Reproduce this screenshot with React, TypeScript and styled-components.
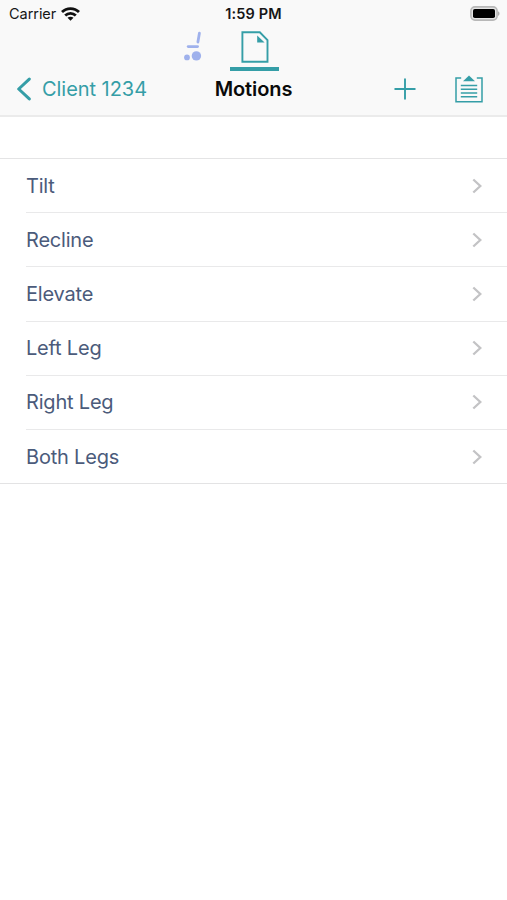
import React from "react";
import styled, { createGlobalStyle } from "styled-components";

const TEAL = "#359ea7";

const GlobalStyle = createGlobalStyle`
  * { box-sizing: border-box; }
  body { margin: 0; background: #fff; font-family: Inter, "Liberation Sans", sans-serif; }
`;

const Screen = styled.main`
  width: 507px;
  height: 900px;
  background: #fff;
  overflow: hidden;
`;

const Header = styled.header`
  height: 117px;
  background: #f9f9f9;
  border-bottom: 2px solid #ebebeb;
`;

const StatusBar = styled.div`
  height: 27px;
  display: grid;
  grid-template-columns: 1fr auto 1fr;
  align-items: center;
  padding: 0 7px;
  color: #161616;
`;

const Carrier = styled.div`
  display: flex;
  align-items: center;
  gap: 5px;
  padding-left: 2px;
  font-size: 14.5px;
  letter-spacing: -0.05px;
`;

const Clock = styled.time`
  font-size: 14.5px;
  font-weight: 600;
  letter-spacing: 0.15px;
`;

const BatterySlot = styled.div`
  display: flex;
  justify-content: flex-end;
`;

const ModeTabs = styled.nav`
  height: 44px;
  display: flex;
  padding-left: 169px;
  gap: 12px;
`;

const ModeTab = styled.button<{ $active?: boolean }>`
  width: 49px;
  height: 44px;
  padding: ${(p) => (p.$active ? "3px 0 0" : "4px 0 0")};
  border: 0;
  border-bottom: 4px solid ${(p) => (p.$active ? TEAL : "transparent")};
  background: none;
  display: flex;
  justify-content: center;
  align-items: flex-start;
`;

const NavBar = styled.div`
  height: 36px;
  display: grid;
  grid-template-columns: 1fr auto 1fr;
  align-items: center;
  padding: 0 16px;
`;

const BackButton = styled.button`
  display: flex;
  align-items: center;
  gap: 10px;
  padding: 0;
  border: 0;
  background: none;
  color: ${TEAL};
  font: 400 20px Inter, sans-serif;
  letter-spacing: -0.05px;
`;

const Title = styled.h1`
  margin: 0;
  font-size: 20px;
  font-weight: 600;
  letter-spacing: -0.1px;
  color: #0a0a0a;
`;

const Actions = styled.div`
  display: flex;
  justify-content: flex-end;
  align-items: center;
  gap: 38px;
  padding-right: 7px;
`;

const IconButton = styled.button`
  display: flex;
  padding: 0;
  border: 0;
  background: none;
`;

const List = styled.ul`
  margin: 41px 0 0;
  padding: 0 0 0 26px;
  list-style: none;
  border-top: 1px solid #e4e4e5;
  border-bottom: 1px solid #e3e3e4;
`;

const Row = styled.li`
  height: 54.2px;
  display: flex;
  align-items: center;
  justify-content: space-between;
  padding-right: 24px;
  color: #4b5b7b;
  font-size: 20px;
  letter-spacing: -0.2px;

  &:first-child {
    height: 53.2px;
  }

  & + & {
    border-top: 1px solid #e9e9ea;
  }
`;

const WifiIcon = () => (
  <svg width="19" height="14" viewBox="0 0 19 14" fill="none" stroke="#111" strokeWidth="2.8">
    <path d="M1 5.1C5.7.4 13.3.4 18 5.1" />
    <path d="M4.2 8.5c3-2.9 7.6-2.9 10.6 0" />
    <path d="M9.5 13.7 6.5 10.8c1.8-1.5 4.2-1.5 6 0Z" fill="#111" stroke="none" />
  </svg>
);

const BatteryIcon = () => (
  <svg width="30" height="15" viewBox="0 0 30 15">
    <rect x="0.9" y="0.9" width="26.2" height="13.2" rx="4" fill="#e4e4e4" stroke="#b8b8b8" strokeWidth="1.6" />
    <rect x="3" y="3" width="22" height="9" rx="1.8" fill="#000" />
    <path d="M28 5.2c2 .8 2 3.8 0 4.6Z" fill="#b0b0b0" />
  </svg>
);

const ChairIcon = () => (
  <svg width="20" height="32" viewBox="0 0 20 32" fill="#9fb1ec">
    <path d="M15.4 2.2 13.9 11" stroke="#9fb1ec" strokeWidth="2.8" strokeLinecap="round" />
    <path d="M4.2 15.6h9.4" stroke="#9fb1ec" strokeWidth="2.8" strokeLinecap="round" />
    <circle cx="3" cy="26.4" r="2.9" />
    <circle cx="12.4" cy="24.9" r="4.7" />
  </svg>
);

const DocumentIcon = () => (
  <svg width="28" height="34" viewBox="0 0 28 34" fill="none" stroke={TEAL} strokeWidth="1.9">
    <path d="M1.4 2.3h17.4l7.7 7.9v21.5H1.4Z" />
    <path d="M16.2 5.5v6.9h7.4Z" fill={TEAL} stroke="none" />
  </svg>
);

const BackIcon = () => (
  <svg width="16" height="24" viewBox="0 0 16 24" fill="none" stroke={TEAL} strokeWidth="3" strokeLinecap="round" strokeLinejoin="round">
    <path d="M13.3 2.1 2.7 12l10.6 9.9" />
  </svg>
);

const PlusIcon = () => (
  <svg width="22" height="22" viewBox="0 0 22 22" stroke={TEAL} strokeWidth="1.9" strokeLinecap="round">
    <path d="M11 1.2v19.6M1.2 11h19.6" />
  </svg>
);

const ReportIcon = () => (
  <svg width="30" height="28" viewBox="0 0 30 28" fill="none" stroke={TEAL} strokeWidth="1.5">
    <path d="M7.2 3H2v23.8h26V3h-5.2" />
    <path d="M9 6.2 15 .4l6 5.8Z" fill={TEAL} stroke="none" />
    <path d="M6.8 10.4h16.4M6.8 14.2h16.4M6.8 18h16.4M6.8 21.8h16.4" />
  </svg>
);

const Disclosure = () => (
  <svg width="12" height="16" viewBox="0 0 12 16" fill="none" stroke="#c3c3c5" strokeWidth="2.3">
    <path d="m2.3 1.5 7 6.5-7 6.5" />
  </svg>
);

const motions = ["Tilt", "Recline", "Elevate", "Left Leg", "Right Leg", "Both Legs"];

export default function App() {
  return (
    <Screen>
      <GlobalStyle />
      <Header>
        <StatusBar>
          <Carrier>
            Carrier
            <WifiIcon />
          </Carrier>
          <Clock>1:59 PM</Clock>
          <BatterySlot>
            <BatteryIcon />
          </BatterySlot>
        </StatusBar>
        <ModeTabs>
          <ModeTab aria-label="Chair">
            <ChairIcon />
          </ModeTab>
          <ModeTab $active aria-label="Document">
            <DocumentIcon />
          </ModeTab>
        </ModeTabs>
        <NavBar>
          <BackButton>
            <BackIcon />
            Client 1234
          </BackButton>
          <Title>Motions</Title>
          <Actions>
            <IconButton aria-label="Add">
              <PlusIcon />
            </IconButton>
            <IconButton aria-label="Report">
              <ReportIcon />
            </IconButton>
          </Actions>
        </NavBar>
      </Header>
      <List>
        {motions.map((motion) => (
          <Row key={motion}>
            {motion}
            <Disclosure />
          </Row>
        ))}
      </List>
    </Screen>
  );
}
